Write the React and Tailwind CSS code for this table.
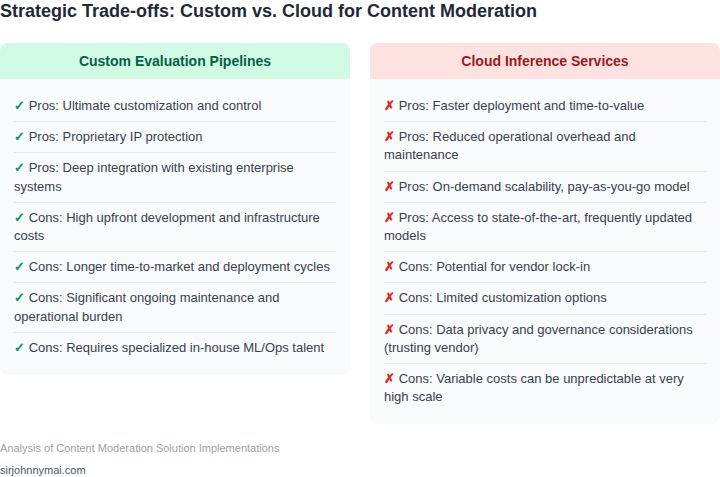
const custom = [
  'Pros: Ultimate customization and control',
  'Pros: Proprietary IP protection',
  'Pros: Deep integration with existing enterprise systems',
  'Cons: High upfront development and infrastructure costs',
  'Cons: Longer time-to-market and deployment cycles',
  'Cons: Significant ongoing maintenance and operational burden',
  'Cons: Requires specialized in-house ML/Ops talent',
]

const cloud = [
  'Pros: Faster deployment and time-to-value',
  'Pros: Reduced operational overhead and maintenance',
  'Pros: On-demand scalability, pay-as-you-go model',
  'Pros: Access to state-of-the-art, frequently updated models',
  'Cons: Potential for vendor lock-in',
  'Cons: Limited customization options',
  'Cons: Data privacy and governance considerations (trusting vendor)',
  'Cons: Variable costs can be unpredictable at very high scale',
]

function Card({ title, items, good }) {
  return (
    <div className="w-[350px] rounded-lg bg-gray-50 overflow-hidden">
      <div
        className={
          good
            ? 'h-9 flex items-center justify-center bg-[#d1fae5] text-[#065f46] text-sm font-bold'
            : 'h-9 flex items-center justify-center bg-[#fee2e2] text-[#991b1b] text-sm font-bold'
        }
      >
        {title}
      </div>
      <ul className="px-[14px] pt-3 pb-3">
        {items.map((t, i) => (
          <li
            key={i}
            className={
              'py-1.5 text-[13px] leading-[1.4] text-[#374151] ' +
              (i < items.length - 1 ? 'border-b border-gray-200' : '')
            }
          >
            {good
              ? <span className="text-[#059669] font-bold">✓</span>
              : <span className="text-[#dc2626] font-bold">✗</span>}{' '}
            {t}
          </li>
        ))}
      </ul>
    </div>
  )
}

export default function App() {
  return (
    <div className="w-[720px] h-[477px] bg-white font-['Liberation_Sans',Arial,sans-serif]">
      <h1 className="text-lg leading-[22px] font-bold text-[#1f2937]">
        Strategic Trade-offs: Custom vs. Cloud for Content Moderation
      </h1>
      <div className="flex items-start gap-5 mt-[21px]">
        <Card title="Custom Evaluation Pipelines" items={custom} good />
        <Card title="Cloud Inference Services" items={cloud} />
      </div>
      <div className="mt-4 text-[11px] leading-4 text-gray-400">
        Analysis of Content Moderation Solution Implementations
      </div>
      <div className="mt-1.5 text-[11px] leading-4 text-gray-600">sirjohnnymai.com</div>
    </div>
  )
}
